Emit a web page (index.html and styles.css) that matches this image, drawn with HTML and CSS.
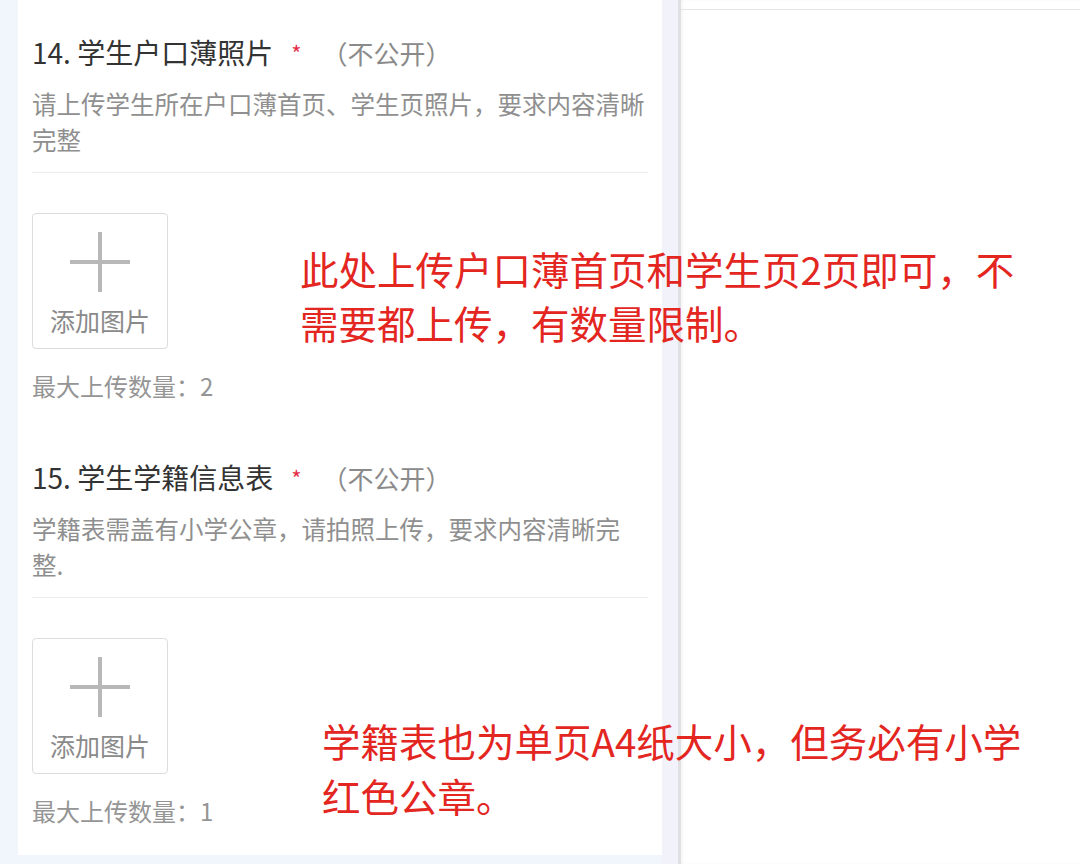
FILE: index.html
```html
<!DOCTYPE html>
<html lang="zh-CN">
<head>
  <meta charset="UTF-8">
  <meta name="viewport" content="width=device-width, initial-scale=1">
  <title>学生资料上传</title>
  <link rel="stylesheet" href="styles.css">
</head>
<body>
  <div class="page">
    <div class="form-side">
      <div class="card">
        <div class="question">
          <h3 class="q-title">14. 学生户口薄照片<span class="required">*</span><span class="private">（不公开）</span></h3>
          <p class="q-desc">请上传学生所在户口薄首页、学生页照片，要求内容清晰完整</p>
          <div class="upload-box">
            <svg class="plus" width="60" height="60" viewBox="0 0 60 60">
              <path d="M30 0V60M0 30H60" stroke="#b8b8b8" stroke-width="4" fill="none"/>
            </svg>
            <span class="upload-label">添加图片</span>
          </div>
          <p class="upload-limit">最大上传数量：2</p>
        </div>

        <div class="question">
          <h3 class="q-title">15. 学生学籍信息表<span class="required">*</span><span class="private">（不公开）</span></h3>
          <p class="q-desc">学籍表需盖有小学公章，请拍照上传，要求内容清晰完整.</p>
          <div class="upload-box">
            <svg class="plus" width="60" height="60" viewBox="0 0 60 60">
              <path d="M30 0V60M0 30H60" stroke="#b8b8b8" stroke-width="4" fill="none"/>
            </svg>
            <span class="upload-label">添加图片</span>
          </div>
          <p class="upload-limit">最大上传数量：1</p>
        </div>
      </div>
    </div>

    <div class="side-panel">
      <div class="side-top"></div>
    </div>

    <!-- 红色批注 -->
    <p class="note note-one">此处上传户口薄首页和学生页2页即可，不<br>需要都上传，有数量限制。</p>
    <p class="note note-two">学籍表也为单页A4纸大小，但务必有小学<br>红色公章。</p>
  </div>
</body>
</html>
```

FILE: styles.css
```css
* {
  margin: 0;
  padding: 0;
  box-sizing: border-box;
}

body {
  font-family: "Noto Sans CJK SC", "Microsoft YaHei", sans-serif;
  background-color: #ffffff;
  color: #333333;
  overflow: hidden;
}

.page {
  position: relative;
  display: flex;
  height: 864px;
}

.form-side {
  width: 678px;
  background-color: #f1f5fc;
  padding: 0 0 9px 18px;
  border-right: 16px solid #f2f2fb;
}

.card {
  width: 644px;
  height: 100%;
  background-color: #ffffff;
  padding: 34px 14px 40px;
}

.question + .question {
  margin-top: 57px;
}

.q-title {
  font-size: 28px;
  font-weight: 400;
  line-height: 36px;
  color: #333333;
}

.required {
  display: inline-block;
  margin-left: 18px;
  font-size: 22px;
  color: #e5304a;
  vertical-align: 2px;
}

.private {
  margin-left: 20px;
  font-size: 26px;
  color: #8a8a8a;
}

.q-desc {
  width: 616px;
  margin-top: 15px;
  padding-bottom: 14px;
  border-bottom: 1px solid #ececec;
  font-size: 24.5px;
  line-height: 36px;
  color: #8f8f8f;
}

.upload-box {
  width: 136px;
  height: 136px;
  margin-top: 40px;
  border: 1px solid #dcdcdc;
  border-radius: 4px;
  display: flex;
  flex-direction: column;
  align-items: center;
  padding-top: 18px;
}

.upload-label {
  margin-top: 13px;
  font-size: 25px;
  line-height: 30px;
  color: #8a8a8a;
}

.upload-limit {
  margin-top: 21px;
  font-size: 24px;
  line-height: 32px;
  color: #959595;
}

.side-panel {
  flex: 1;
  background-color: #ffffff;
  border-left: 3px solid #e0e0e4;
  box-shadow: inset 2px 0 3px rgba(0, 0, 0, 0.04);
}

.side-top {
  height: 10px;
  border-bottom: 1px solid #e6e6e8;
}

.note {
  position: absolute;
  font-size: 38.5px;
  color: #e3261f;
  white-space: nowrap;
}

.note-one {
  left: 300px;
  top: 241px;
  line-height: 54px;
}

.note-two {
  left: 322px;
  top: 713px;
  line-height: 55px;
}
```
